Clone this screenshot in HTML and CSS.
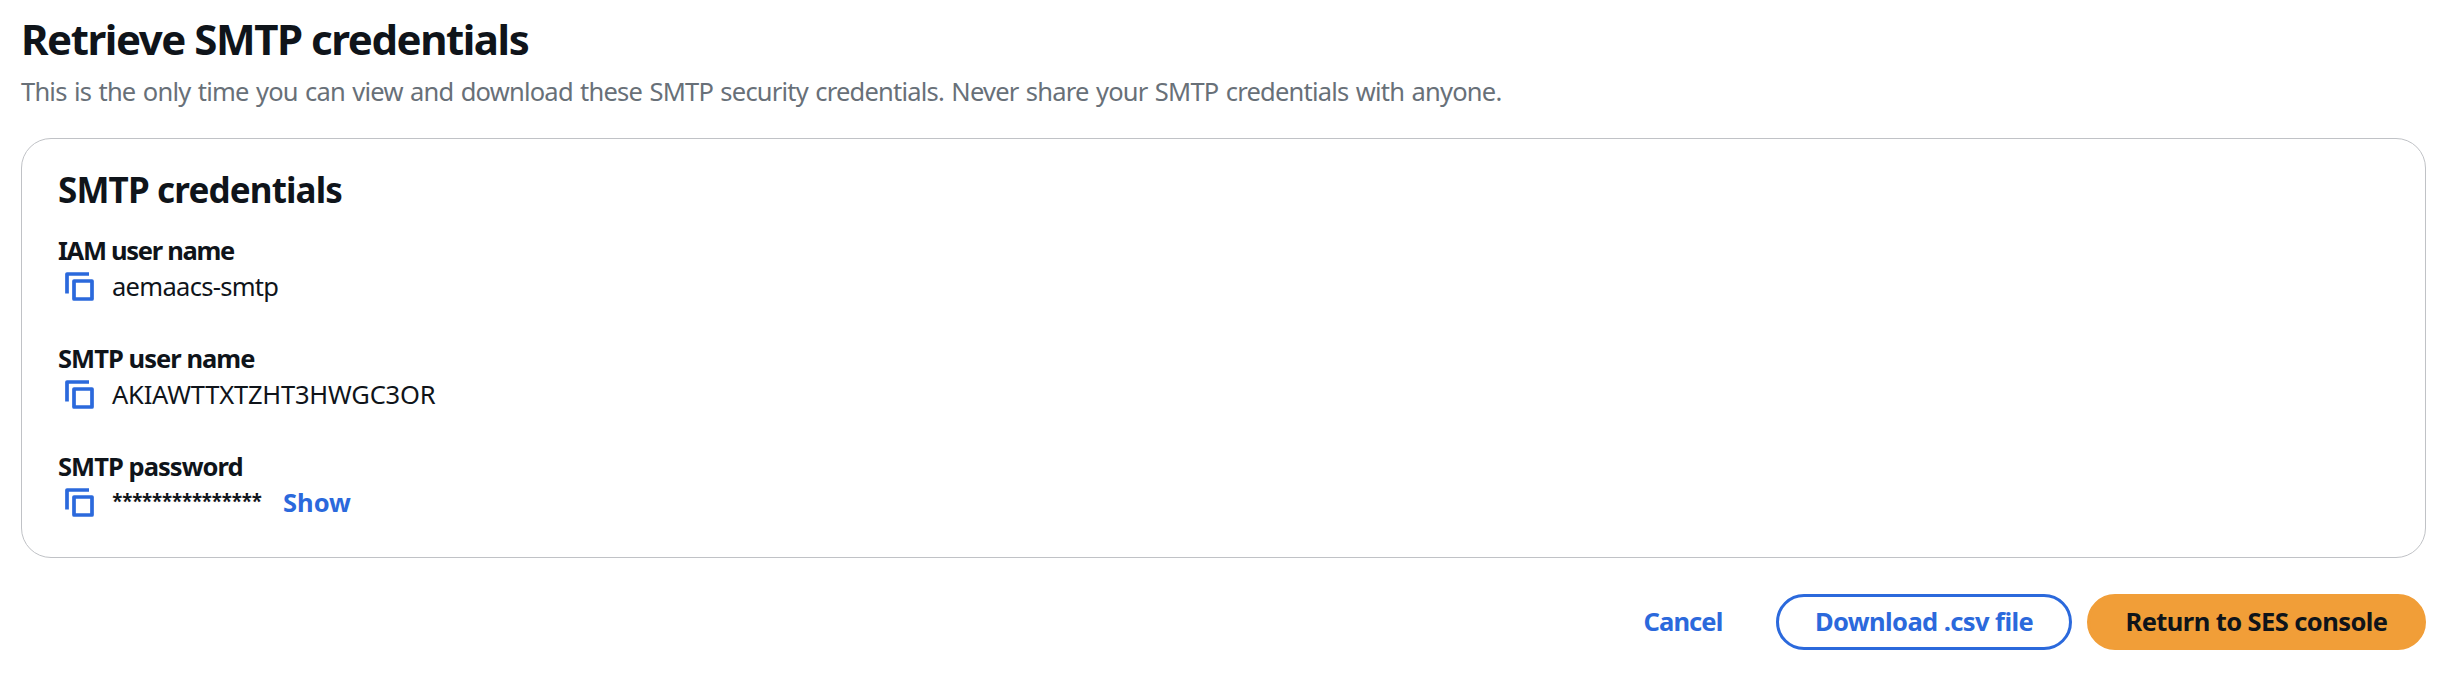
FILE: index.html
```html
<!DOCTYPE html>
<html lang="en">
<head>
<meta charset="utf-8">
<title>Retrieve SMTP credentials</title>
<link rel="stylesheet" href="styles.css">
</head>
<body>
<svg class="defs" width="0" height="0" aria-hidden="true">
  <symbol id="copy" viewBox="0 0 30 30">
    <path d="M2 21.5V2H24M9 9H27V27H9Z" fill="none" stroke="currentColor" stroke-width="3.7" stroke-linejoin="round"/>
  </symbol>
</svg>
<main class="page">
  <h1 class="title">Retrieve SMTP credentials</h1>
  <p class="description">This is the only time you can view and download these SMTP security credentials. Never share your SMTP credentials with anyone.</p>
  <section class="card">
    <h2 class="card-title">SMTP credentials</h2>
    <dl class="fields">
      <div class="field">
        <dt class="label label-iam">IAM user name</dt>
        <dd class="value"><svg class="copy"><use href="#copy"/></svg><span class="text">aemaacs-smtp</span></dd>
      </div>
      <div class="field">
        <dt class="label">SMTP user name</dt>
        <dd class="value"><svg class="copy"><use href="#copy"/></svg><span class="text key">AKIAWTTXTZHT3HWGC3OR</span></dd>
      </div>
      <div class="field">
        <dt class="label">SMTP password</dt>
        <dd class="value"><svg class="copy"><use href="#copy"/></svg><span class="text mask">***************</span><a class="show">Show</a></dd>
      </div>
    </dl>
  </section>
  <div class="actions">
    <button class="button link">Cancel</button>
    <button class="button outline">Download .csv file</button>
    <button class="button primary">Return to SES console</button>
  </div>
</main>
</body>
</html>
```
FILE: styles.css
```css
* { box-sizing: border-box; margin: 0; padding: 0; }
body {
  background: #fff;
  color: #0f141a;
  font: 25.5px/36px "Noto Sans", "Open Sans", sans-serif;
}
.defs { display: block; position: absolute; }
.page { padding: 11px 16px 0 21px; }
.title { font-size: 42px; line-height: 56px; font-weight: 700; letter-spacing: -1.45px; }
.description { margin-top: 6px; color: #687078; letter-spacing: -0.79px; word-spacing: 1.5px; white-space: nowrap; }
.card {
  height: 420px;
  margin-top: 29px;
  padding: 29px 36px;
  border: 1px solid #c0c2c6;
  border-radius: 30px;
}
.card-title { font-size: 35px; line-height: 44px; font-weight: 700; letter-spacing: -0.85px; }
.fields { display: flex; flex-direction: column; gap: 36px; margin-top: 20px; }
.label { font-weight: 700; letter-spacing: -0.95px; }
.label-iam { letter-spacing: -1.3px; }
.value { display: flex; align-items: center; height: 36px; }
.copy { width: 30px; height: 30px; margin: 1px 17px 0 7px; color: #2b69dc; }
.text { letter-spacing: -0.7px; }
.key { letter-spacing: -0.2px; }
.mask {
  width: 149px;
  font-family: "Open Sans", sans-serif;
  font-stretch: 75%;
  font-weight: 600;
  letter-spacing: -0.7px;
}
.show { margin-left: 22px; color: #2b69dc; font-weight: 700; }
.actions { display: flex; justify-content: flex-end; margin-top: 36px; }
.button {
  height: 56px;
  padding-bottom: 2px;
  border: 3px solid transparent;
  border-radius: 28px;
  background: none;
  color: #2b69dc;
  font: 700 25.5px/48px "Noto Sans", "Open Sans", sans-serif;
  letter-spacing: -0.58px;
  white-space: nowrap;
}
.link { width: 158px; margin-right: 14px; letter-spacing: -0.9px; }
.outline { width: 296px; margin-right: 15px; border-color: #2b69dc; }
.primary { width: 339px; background: #f19e38; border-color: #f19e38; color: #0f141a; }
```
